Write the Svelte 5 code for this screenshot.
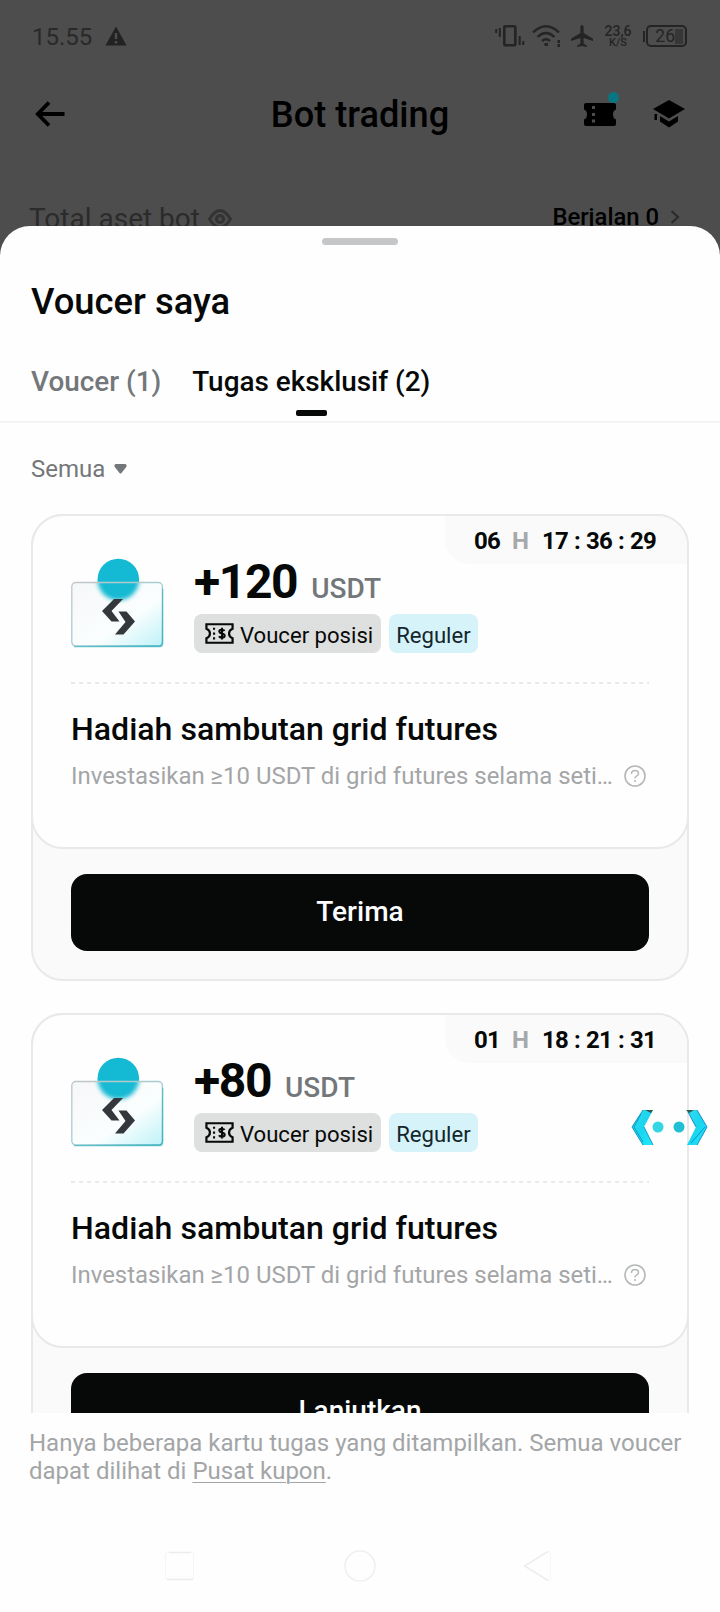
<script lang="ts">
	interface Task {
		amount: string;
		days: string;
		time: string[];
		action: string;
	}

	const tasks: Task[] = [
		{ amount: '+120', days: '06', time: ['17', '36', '29'], action: 'Terima' },
		{ amount: '+80', days: '01', time: ['18', '21', '31'], action: 'Lanjutkan' }
	];
</script>

<div class="screen">
	<div class="status-bar">
		<span class="clock">15.55</span>
		<svg class="warning" width="22" height="20" viewBox="0 0 22 20">
			<path d="M11 0.5 21.5 19.5H0.5Z" fill="#222" />
			<path d="M11 7v6M11 15v2.5" stroke="#4d4d4d" stroke-width="2.4" />
		</svg>
		<div class="status-icons">
			<svg width="30" height="24" viewBox="0 0 30 24" fill="none" stroke="#242424">
				<rect x="9.3" y="2.3" width="11" height="19" rx="1" stroke-width="2.6" />
				<path d="M1.2 5v4M4.8 4v9M24.7 12v9M28.2 17v4" stroke-width="2" />
			</svg>
			<svg class="wifi" width="30" height="24" viewBox="0 0 30 24" fill="none" stroke="#242424" stroke-width="2.4">
				<path d="M1 8.5Q14 -4 27 8.5M5.5 13Q14 5 22.5 13M10 17Q14 13.5 18 17" />
				<path d="M12.5 20.5h3.5M25.5 17.5h2.5M25.5 21.5h2.5" stroke-width="2.8" />
			</svg>
			<svg class="plane" width="24" height="24" viewBox="0 0 24 24">
				<path
					d="M12 1c1.2 0 1.6 1.2 1.6 2.5v5.5l9.4 5.8v2.2l-9.4-3v5.5l3.4 2.3v1.2l-5-1-5 1v-1.2l3.4-2.3v-5.5l-9.4 3v-2.2l9.4-5.8v-5.5C10.4 2.2 10.8 1 12 1Z"
					fill="#242424"
				/>
			</svg>
			<div class="speed">
				<span>23,6</span>
				<small>K/S</small>
			</div>
			<div class="battery">
				<span class="cap"></span>
				<span class="cell">26<i></i></span>
			</div>
		</div>
	</div>

	<header class="app-bar">
		<svg class="back" width="30" height="26" viewBox="0 0 30 26" fill="none" stroke="#000" stroke-width="3.8">
			<path d="M14 1.5 2.8 13 14 24.5M2.8 13H29.5" />
		</svg>
		<h1>Bot trading</h1>
		<div class="tools">
			<div class="ticket">
				<svg width="32" height="23" viewBox="0 0 32 23">
					<path
						d="M2 0H30Q32 0 32 2V6.5Q29 7.5 29 11.5T32 16.5V21Q32 23 30 23H2Q0 23 0 21V16.5Q3 15.5 3 11.5T0 6.5V2Q0 0 2 0Z"
						fill="#000"
					/>
					<path d="M8 4.5h3M8 11.5h3M8 18h3" stroke="#4d4d4d" stroke-width="3.2" />
				</svg>
				<span class="dot"></span>
			</div>
			<svg width="32" height="28" viewBox="0 0 32 28" fill="#000">
				<path d="M16 0 32 9 16 18.5 0 9Z" />
				<path d="M7 16 16 21.5 25 16V21.5L16 27.5 7 21.5Z" />
				<path d="M1.5 14H4V20H1.5Z" />
			</svg>
		</div>
	</header>

	<div class="summary">
		<span class="label">Total aset bot</span>
		<svg class="eye" width="24" height="20" viewBox="0 0 24 20" fill="none" stroke="#333">
			<path d="M1.5 10Q12-7 22.5 10Q12 27 1.5 10Z" stroke-width="2.8" />
			<circle cx="12" cy="10" r="3.500" stroke-width="3.2" />
		</svg>
		<span class="running">Berjalan 0</span>
		<svg class="chevron" width="10" height="14" viewBox="0 0 10 14" fill="none" stroke="#2b2b2b" stroke-width="2.2">
			<path d="M1.5 1 8 7 1.5 13" />
		</svg>
	</div>

	<section class="sheet">
		<div class="handle"></div>
		<h2>Voucer saya</h2>
		<nav class="tabs">
			<span class="tab">Voucer (1)</span>
			<span class="tab active">Tugas eksklusif (2)</span>
		</nav>

		<div class="filter">
			<span>Semua</span>
			<svg width="13" height="10" viewBox="0 0 13 10">
				<path d="M1.5 0H11.5Q13.3 1 12.2 3L7.5 9Q6.5 10 5.5 9L.8 3Q-.3 1 1.5 0Z" fill="#74777a" />
			</svg>
		</div>

		<div class="list">
			{#each tasks as task (task.amount)}
				<article class="card">
					<div class="card-body">
						<div class="timer">
							<b>{task.days}</b>
							<b class="unit">H</b>
							<div class="time">
								<b>{task.time[0]}</b><b>:</b><b>{task.time[1]}</b><b>:</b><b>{task.time[2]}</b>
							</div>
						</div>
						<div class="reward">
							<svg class="art" width="93" height="92" viewBox="0 0 93 92">
								<defs>
									<linearGradient id="glass" x1="0" y1="0" x2="1" y2="1">
										<stop offset="0" stop-color="#f6f7f8" />
										<stop offset=".6" stop-color="#fbfefe" />
										<stop offset="1" stop-color="#bdf2f8" />
									</linearGradient>
									<linearGradient id="rim" x1="0" y1="0" x2="1" y2="1">
										<stop offset="0" stop-color="#c3c5c6" />
										<stop offset=".5" stop-color="#a5cdd1" />
										<stop offset="1" stop-color="#35adba" />
									</linearGradient>
									<clipPath id="upper"><rect width="93" height="25" /></clipPath>
									<clipPath id="lower"><rect x="2" y="25" width="89" height="63" /></clipPath>
									<filter id="soft"><feGaussianBlur stdDeviation="2" /></filter>
								</defs>
								<circle cx="47.3" cy="21.5" r="20.8" fill="#14bad3" clip-path="url(#upper)" />
								<rect x="0.8" y="24.5" width="91" height="64" rx="4" fill="url(#glass)" />
								<g clip-path="url(#lower)">
									<circle cx="47.3" cy="21.5" r="20.8" fill="#14bad3" filter="url(#soft)" />
								</g>
								<rect x="0.8" y="24.5" width="90.6" height="63.5" rx="4" fill="none" stroke="url(#rim)" stroke-width="1.3" />
								<path d="M3 88.7H89Q91.6 88.5 91.7 85.5V31" fill="none" stroke="#41b5c1" stroke-width="1.2" opacity=".75" />
								<path
									d="M43 41H52L40.5 53 48.5 63.5H40.5L31 53ZM47.5 53.5H55.5L64 63.5 52.5 76.5H44L54.5 64Z"
									fill="#34373b"
								/>
							</svg>
							<div class="reward-info">
								<div class="amount"><strong>{task.amount}</strong><span>USDT</span></div>
								<div class="tags">
									<span class="tag">
										<svg width="29" height="21" viewBox="0 0 30 22" fill="none" stroke="#060908">
											<path
												d="M1.3 1.3H28.7V6Q25 7.5 25 11T28.7 16V20.7H1.3V16Q5 14.5 5 11T1.3 6Z"
												stroke-width="2.3"
											/>
											<path d="M9.3 5v2.2M9.3 10v2.2M9.3 15v2.2" stroke-width="2.2" />
											<path
												d="M20.3 8.2Q19.5 7 17.5 7 14.7 7 14.8 9 15 10.5 17.5 11 20.4 11.5 20.4 13.4 20.2 15.3 17.5 15.3 15.3 15.3 14.5 13.9M17.6 5V17.2"
												stroke-width="2.2"
											/>
										</svg>
										Voucer posisi
									</span>
									<span class="tag regular">Reguler</span>
								</div>
							</div>
						</div>
						<div class="divider"></div>
						<h3>Hadiah sambutan grid futures</h3>
						<div class="desc">
							<span>Investasikan ≥10 USDT di grid futures selama seti…</span>
							<svg width="22" height="22" viewBox="0 0 22 22" fill="none" stroke="#b5b7b8">
								<circle cx="11" cy="11" r="10" stroke-width="1.6" />
								<path
									d="M7.5 9Q7.5 5.5 11 5.5T14.5 8.5Q14.5 10 12.5 11.2 11 12 11 13.6M11 15v2"
									stroke-width="1.5"
								/>
							</svg>
						</div>
					</div>
					<button>{task.action}</button>
				</article>
			{/each}
		</div>

		<p class="note">
			Hanya beberapa kartu tugas yang ditampilkan. Semua voucer dapat dilihat di <u>Pusat kupon</u>.
		</p>

		<div class="nav-bar">
			<svg width="32" height="32" viewBox="0 0 32 32" fill="none" stroke="#ececec">
				<rect x="1.5" y="2.5" width="28" height="27" rx="2" stroke="#f5f5f5" />
				<path d="M5 2.5h22M3 29.5h26" stroke-width="1.5" />
			</svg>
			<svg width="32" height="32" viewBox="0 0 32 32" fill="none">
				<circle cx="16" cy="16" r="15" stroke="#f0f0f0" stroke-width="1.6" />
			</svg>
			<svg width="32" height="32" viewBox="0 0 32 32" fill="none" stroke="#ededed">
				<path d="M24 1.5 0.5 16 24 30.5" stroke-width="1.5" />
				<path d="M24 1.5Q26.5 1 26.5 4V28Q26.5 31 24 30.5" stroke="#f7f7f7" />
			</svg>
		</div>
	</section>

	<svg class="mascot" width="78" height="38" viewBox="0 0 78 38">
		<defs>
			<linearGradient id="cyan" x1="0" y1="0" x2="1" y2="1">
				<stop offset="0" stop-color="#32dcf0" />
				<stop offset=".5" stop-color="#19d5ee" />
				<stop offset="1" stop-color="#20ebfb" />
			</linearGradient>
		</defs>
		<path d="M12 1H22L13 18 22 36H12L1 18Z" fill="url(#cyan)" />
		<path d="M12 1 1 18 12 36M10 5 3 18 12 33M13 18 22 36" fill="none" stroke="#129ac6" stroke-width="1" />
		<path d="M14 1H22L20 4Z" fill="#315b50" />
		<path d="M66 1H56L65 18 56 36H66L76 18Z" fill="url(#cyan)" />
		<path d="M66 1 76 18 66 36M57 3 65 18M60 34 74 18" fill="none" stroke="#138fd0" stroke-width="1" />
		<path d="M55 1H63L58 4Z" fill="#315b50" />
		<circle cx="27" cy="18" r="5.5" fill="#35d5e3" />
		<circle cx="48" cy="18" r="5.5" fill="#20bfd4" />
	</svg>
</div>

<style>
	:global(body) {
		margin: 0;
	}

	.screen {
		position: relative;
		display: flex;
		flex-direction: column;
		width: 720px;
		height: 1612px;
		overflow: hidden;
		background: #4d4d4d;
		color: #060908;
		font-family: Roboto, 'Liberation Sans', sans-serif;
	}

	svg {
		display: block;
		flex: none;
	}

	h1,
	h2,
	h3,
	p {
		margin: 0;
		font-weight: 500;
	}

	.status-bar {
		display: flex;
		align-items: center;
		height: 72px;
		padding: 0 33px 0 32px;
		color: #242424;
	}

	.clock {
		padding-top: 2px;
		color: #292929;
		font-size: 24px;
		line-height: 28px;
	}

	.warning {
		margin-left: 13px;
	}

	.status-icons {
		display: flex;
		align-items: center;
		margin-left: auto;
	}

	.wifi {
		margin-left: 7px;
	}

	.plane {
		margin-left: 8px;
	}

	.speed {
		display: flex;
		flex-direction: column;
		align-items: center;
		width: 30px;
		margin: 0 10px 0 9px;
		font-size: 14px;
		line-height: 13px;
		font-weight: 500;
	}

	.speed small {
		font-size: 11px;
		line-height: 9px;
	}

	.battery {
		display: flex;
		align-items: center;
		gap: 1px;
	}

	.cap {
		width: 2px;
		height: 11px;
		background: #242424;
	}

	.cell {
		display: flex;
		align-items: center;
		justify-content: flex-end;
		box-sizing: border-box;
		width: 41px;
		height: 22px;
		padding-right: 2px;
		border: 2px solid #242424;
		border-radius: 5px;
		font-size: 17.5px;
	}

	.cell i {
		width: 8px;
		height: 15px;
		background: #373737;
	}

	.app-bar {
		display: grid;
		grid-template-columns: 134px 1fr 134px;
		align-items: center;
		height: 84px;
		padding: 0 35px;
		color: #000;
	}

	h1 {
		padding-top: 1px;
		font-size: 36.2px;
		line-height: 42px;
		text-align: center;
	}

	.tools {
		display: flex;
		align-items: center;
		justify-content: flex-end;
		gap: 37px;
	}

	.ticket {
		position: relative;
	}

	.dot {
		position: absolute;
		top: -11px;
		right: -3px;
		width: 11px;
		height: 11px;
		border-radius: 50%;
		background: #087681;
	}

	.summary {
		display: flex;
		align-items: flex-start;
		height: 70px;
		padding: 0 40px 0 29px;
	}

	.label {
		margin-top: 48px;
		color: #2b2b2b;
		font-size: 28px;
		line-height: 30px;
		white-space: nowrap;
	}

	.eye {
		margin: 53px 0 0 8px;
	}

	.running {
		margin: 46px 0 0 auto;
		color: #000;
		font-size: 23.8px;
		line-height: 30px;
		font-weight: 500;
	}

	.chevron {
		margin: 54px 0 0 11px;
	}

	.sheet {
		position: relative;
		display: flex;
		flex: none;
		flex-direction: column;
		height: 1386px;
		border-radius: 30px 30px 0 0;
		background: #fefefe;
	}

	.handle {
		width: 76px;
		height: 7px;
		margin: 12px auto 0;
		border-radius: 4px;
		background: #c4c6c8;
	}

	h2 {
		margin: 36px 31px 0;
		font-size: 36.4px;
		line-height: 42px;
	}

	.tabs {
		display: flex;
		gap: 31px;
		height: 78px;
		margin-top: 20px;
		padding-left: 31px;
		border-bottom: 2px solid #f4f5f5;
	}

	.tab {
		position: relative;
		padding-top: 22px;
		color: #74777a;
		font-size: 27.9px;
		line-height: 34px;
		font-weight: 500;
	}

	.active {
		color: #060908;
	}

	.active::after {
		content: '';
		position: absolute;
		left: 50%;
		bottom: 5px;
		width: 31px;
		height: 6px;
		margin-left: -15px;
		border-radius: 2px;
		background: #060908;
	}

	.filter {
		display: flex;
		align-items: center;
		gap: 9px;
		height: 91px;
		padding-left: 31px;
		color: #74777a;
		font-size: 24px;
		line-height: 28px;
	}

	.list {
		display: flex;
		flex-direction: column;
		gap: 32px;
		height: 899px;
		padding: 0 31px;
		overflow: hidden;
	}

	.card {
		flex: none;
		box-sizing: border-box;
		height: 467px;
		border: 2px solid #e9e9e9;
		border-radius: 32px;
		background: #fafafa;
	}

	.card-body {
		position: relative;
		box-sizing: border-box;
		height: 335px;
		margin: -2px -2px 0;
		padding: 42px 38px 0;
		border: 2px solid #e9e9e9;
		border-radius: 32px;
		background: #fefefe;
	}

	.timer {
		position: absolute;
		top: 0;
		right: 0;
		display: grid;
		grid-template-columns: 38px 30px 1fr;
		box-sizing: border-box;
		width: 242px;
		height: 48px;
		padding: 0 31px 0 29px;
		border-radius: 0 30px 0 24px;
		background: #fafafa;
		font-size: 24px;
		line-height: 50px;
		letter-spacing: -0.8px;
	}

	.unit {
		color: #a6a8aa;
	}

	.time {
		display: flex;
		justify-content: space-between;
	}

	.reward {
		display: flex;
		height: 92px;
	}

	.art {
		margin-right: 30px;
	}

	.reward-info {
		display: flex;
		flex-direction: column;
		gap: 3px;
	}

	.amount {
		display: flex;
		align-items: baseline;
		gap: 14px;
		height: 53px;
		line-height: 48px;
	}

	.amount strong {
		font-size: 48px;
		letter-spacing: -1.4px;
	}

	.amount span {
		color: #74777a;
		font-size: 28px;
		font-weight: 500;
	}

	.tags {
		display: flex;
		gap: 8px;
	}

	.tag {
		display: flex;
		align-items: center;
		gap: 6px;
		box-sizing: border-box;
		height: 39px;
		padding: 3px 8px 0 11px;
		border-radius: 8px;
		background: #dedfdf;
		font-size: 22.1px;
		line-height: 36px;
		white-space: nowrap;
	}

	.regular {
		padding: 3px 7px 0;
		background: #d6f3f9;
		color: #13262b;
	}

	.tag svg {
		margin-top: -4px;
	}

	.divider {
		height: 2px;
		margin-top: 32px;
		background: repeating-linear-gradient(90deg, #e9e9e9 0 4px, transparent 4px 8px);
	}

	h3 {
		margin-top: 26px;
		font-size: 32.1px;
		line-height: 38px;
		white-space: nowrap;
	}

	.desc {
		display: flex;
		align-items: center;
		justify-content: space-between;
		height: 34px;
		margin-top: 11px;
		padding-right: 3px;
		color: #a3a5a7;
		font-size: 23.95px;
		line-height: 34px;
		white-space: nowrap;
	}

	button {
		display: block;
		width: 578px;
		height: 77px;
		margin: 25px 38px 0;
		padding: 0 0 2px;
		border: 0;
		border-radius: 16px;
		background: #060908;
		color: #fefefe;
		font: 500 28px Roboto, 'Liberation Sans', sans-serif;
	}

	.note {
		padding: 16px 30px 0 29px;
		color: #a3a5a7;
		font-size: 24px;
		line-height: 28px;
		font-weight: 400;
	}

	u {
		text-decoration-thickness: 1px;
		text-underline-offset: 3px;
	}

	.nav-bar {
		display: flex;
		justify-content: space-between;
		margin: auto 164px 30px;
	}

	.mascot {
		position: absolute;
		left: 631px;
		top: 1109px;
	}
</style>
